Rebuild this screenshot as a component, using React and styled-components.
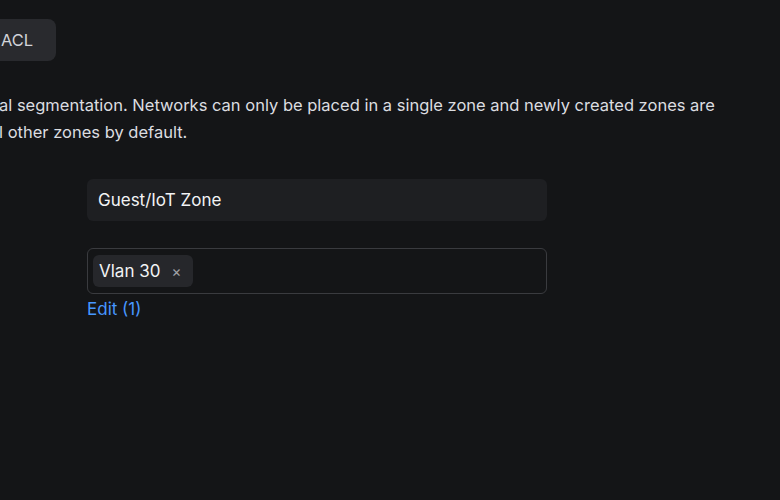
import styled, { createGlobalStyle } from "styled-components";

const GlobalStyle = createGlobalStyle`
  html, body {
    margin: 0;
    background: #141517;
  }
  body {
    font-family: Inter, "Noto Sans", sans-serif;
    color: #dcdde0;
  }
`;

const App = () => {
  return (
    <Page>
      <GlobalStyle />
      <Toolbar>
        <TabButton>ACL</TabButton>
      </Toolbar>
      <Description>
        al segmentation. Networks can only be placed in a single zone and newly created zones are
        <br />
        l other zones by default.
      </Description>
      <Form>
        <Field>
          <TextInput defaultValue="Guest/IoT Zone" aria-label="zone name" />
        </Field>
        <Field>
          <MultiSelect>
            <Chip>
              Vlan 30
              <Remove aria-label="remove">×</Remove>
            </Chip>
          </MultiSelect>
          <EditLink href="#">Edit (1)</EditLink>
        </Field>
      </Form>
    </Page>
  );
};

const Page = styled.div`
  width: 780px;
  height: 500px;
  overflow: hidden;
  padding-top: 19px;
  box-sizing: border-box;
`;

const Toolbar = styled.div`
  display: flex;
`;

const TabButton = styled.button`
  height: 42px;
  margin-left: -22px;
  padding: 0 23px;
  border: 0;
  border-radius: 8px;
  background: #292a2e;
  color: #d2d4d9;
  font-family: inherit;
  font-size: 16.5px;
`;

const Description = styled.p`
  margin: 31px 0 0 -1px;
  font-size: 16.5px;
  line-height: 27px;
  color: #dcdde0;
  white-space: nowrap;
`;

const Form = styled.div`
  display: flex;
  flex-direction: column;
  gap: 27px;
  margin: 33px 0 0 87px;
  width: 460px;
`;

const Field = styled.div`
  display: flex;
  flex-direction: column;
`;

const TextInput = styled.input`
  height: 42px;
  padding: 0 11px;
  border: 0;
  border-radius: 6px;
  background: #1e1f22;
  color: #f2f3f5;
  font-family: inherit;
  font-size: 17px;
  box-sizing: border-box;
  outline: none;
`;

const MultiSelect = styled.div`
  display: flex;
  align-items: center;
  height: 46px;
  padding: 0 5px;
  border: 1px solid #3a3b3f;
  border-radius: 6px;
  box-sizing: border-box;
`;

const Chip = styled.span`
  display: inline-flex;
  align-items: center;
  gap: 11px;
  height: 32px;
  padding: 0 12px 0 6px;
  border-radius: 6px;
  background: #26272b;
  color: #f2f3f5;
  font-size: 17px;
`;

const Remove = styled.span`
  color: #a0a2a7;
  font-size: 15px;
`;

const EditLink = styled.a`
  margin-top: 5px;
  color: #4797ff;
  font-size: 17px;
  text-decoration: none;
`;

export default App;
